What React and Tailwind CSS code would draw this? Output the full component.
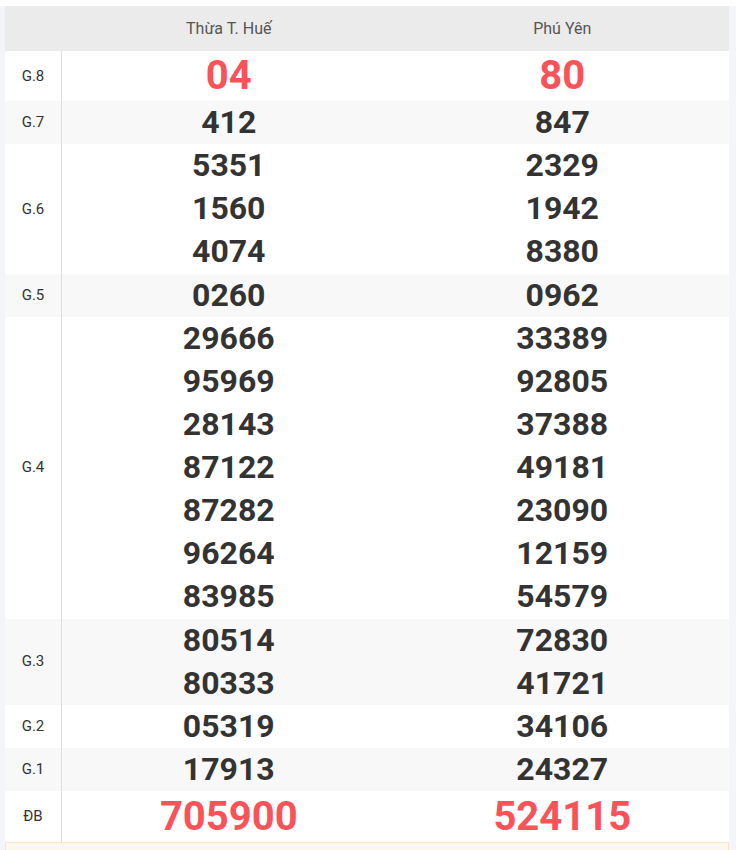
import React from 'react';

const rows = [
  { label: 'G.8', a: ['04'], b: ['80'], big: true, lh: 'leading-[50px]' },
  { label: 'G.7', a: ['412'], b: ['847'] },
  { label: 'G.6', a: ['5351', '1560', '4074'], b: ['2329', '1942', '8380'] },
  { label: 'G.5', a: ['0260'], b: ['0962'] },
  {
    label: 'G.4',
    a: ['29666', '95969', '28143', '87122', '87282', '96264', '83985'],
    b: ['33389', '92805', '37388', '49181', '23090', '12159', '54579'],
  },
  { label: 'G.3', a: ['80514', '80333'], b: ['72830', '41721'] },
  { label: 'G.2', a: ['05319'], b: ['34106'] },
  { label: 'G.1', a: ['17913'], b: ['24327'] },
  { label: 'ĐB', a: ['705900'], b: ['524115'], big: true, lh: 'leading-[51px]' },
];

function Cell({ nums, big, lh }) {
  return (
    <div className="flex-1 flex flex-col items-center justify-center">
      {nums.map((n, i) => (
        <div
          key={i}
          className={
            big
              ? `text-[40px] font-bold text-[#f9535a] ${lh}`
              : 'text-[32px] font-bold text-[#333] leading-[43.125px]'
          }
        >
          {n}
        </div>
      ))}
    </div>
  );
}

export default function App() {
  return (
    <div className="min-h-screen bg-white pt-[6px] font-['Roboto','Liberation_Sans',sans-serif]">
      <div className="bg-[#f4f5f8] pl-[5px] pr-[7px] min-h-[844px]">
        <div className="bg-white">
          <div className="flex h-[45px] bg-[#ebebeb] text-[16px] text-[#555] items-center">
            <div className="w-[57px]"></div>
            <div className="flex-1 text-center">Thừa T. Huế</div>
            <div className="flex-1 text-center">Phú Yên</div>
          </div>
          {rows.map((r, i) => (
            <div key={r.label} className={`flex ${i % 2 === 1 ? 'bg-[#f8f8f8]' : 'bg-white'}`}>
              <div className="w-[57px] shrink-0 border-r border-[#dddddd] flex items-center justify-center text-[15px] text-[#333]">
                {r.label}
              </div>
              <Cell nums={r.a} big={r.big} lh={r.lh} />
              <Cell nums={r.b} big={r.big} lh={r.lh} />
            </div>
          ))}
        </div>
        <div className="h-[40px] bg-[#fdf8ee] border border-[#f5e6c8]"></div>
      </div>
    </div>
  );
}
